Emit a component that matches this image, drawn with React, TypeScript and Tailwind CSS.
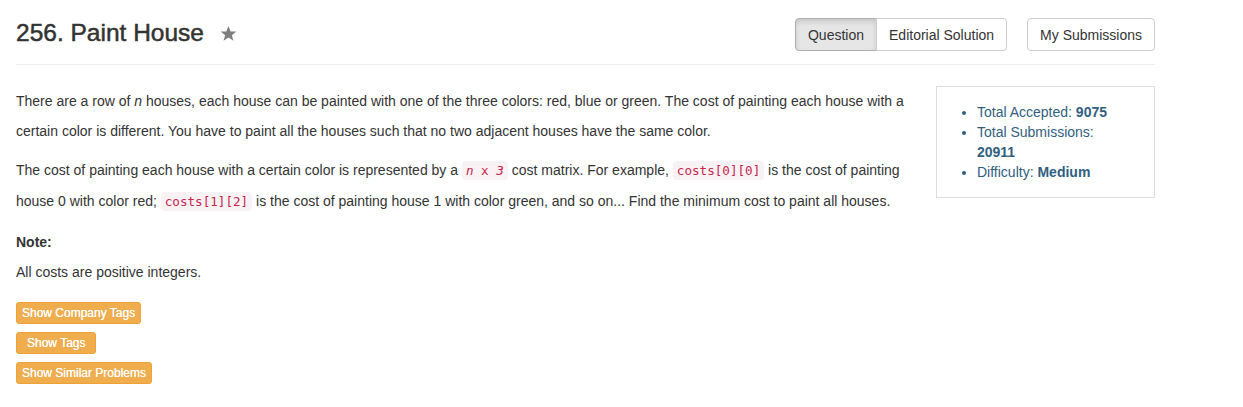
import React from "react";

function Star() {
  return (
    <svg viewBox="0 0 24 24" className="h-[17px] w-[17px]" fill="#7f7f7f">
      <polygon points="12,1.5 15,9 23,9.3 16.8,14.3 19,22.3 12,17.8 5,22.3 7.2,14.3 1,9.3 9,9" />
    </svg>
  );
}

function Code({ children }: { children: React.ReactNode }) {
  return (
    <code
      className="rounded px-1 py-0.5 text-[12.6px] bg-[#f9f2f4] text-[#c7254e]"
      style={{ fontFamily: '"DejaVu Sans Mono", "Liberation Mono", monospace' }}
    >
      {children}
    </code>
  );
}

function TagButton({ label, wide }: { label: string; wide?: boolean }) {
  return (
    <button
      className={
        "h-[22px] rounded-[3px] border border-[#eea236] bg-[#f0ad4e] text-[12px] leading-[18px] text-white [text-shadow:0_0_0.4px_#fff] " +
        (wide ? "px-[10px]" : "px-[5px]")
      }
    >
      {label}
    </button>
  );
}

export default function App() {
  return (
    <div
      className="min-h-[407px] bg-white text-[14px] text-[#333]"
      style={{ fontFamily: '"Liberation Sans", Helvetica, Arial, sans-serif' }}
    >
      <div className="w-[1155px] pl-[16px] pt-[18px]">
        {/* header */}
        <div className="flex items-start justify-between">
          <div className="flex items-center">
            <h3 className="text-[24.5px] font-normal leading-[29px] text-[#333] [-webkit-text-stroke:0.5px_#333]">
              256. Paint House
            </h3>
            <span className="ml-[16px] mt-[1px]">
              <Star />
            </span>
          </div>
          <div className="flex items-center">
            <div className="flex">
              <button className="h-[33px] rounded-l border border-[#adadad] bg-[#e6e6e6] px-3 leading-[20px] text-[#333] shadow-[inset_0_3px_5px_rgba(0,0,0,0.125)]">
                Question
              </button>
              <button className="-ml-px h-[33px] rounded-r border border-[#ccc] bg-white px-3 leading-[20px] text-[#333]">
                Editorial Solution
              </button>
            </div>
            <button className="ml-[20px] h-[33px] rounded border border-[#ccc] bg-white px-3 leading-[20px] text-[#333]">
              My Submissions
            </button>
          </div>
        </div>
        <hr className="mt-[13px] border-t border-[#eee]" />

        {/* content */}
        <div className="mt-[21px] flex">
          <div className="w-[906px]">
            <p className="mb-[9px] leading-[30px]">
              There are a row of <i>n</i> houses, each house can be painted with one of the three
              colors: red, blue or green. The cost of painting each house with a certain color is
              different. You have to paint all the houses such that no two adjacent houses have the
              same color.
            </p>
            <p className="mb-[10px] leading-[30px]">
              The cost of painting each house with a certain color is represented by a{" "}
              <Code>
                <i>n</i> x <i>3</i>
              </Code>{" "}
              cost matrix. For example, <Code>costs[0][0]</Code> is the cost of painting house 0
              with color red; <Code>costs[1][2]</Code> is the cost of painting house 1 with color
              green, and so on... Find the minimum cost to paint all houses.
            </p>
            <p className="leading-[30px]">
              <b>Note:</b>
              <br />
              All costs are positive integers.
            </p>
            <div className="mt-[15px] flex flex-col items-start gap-2">
              <TagButton label="Show Company Tags" />
              <TagButton label="Show Tags" wide />
              <TagButton label="Show Similar Problems" />
            </div>
          </div>
          <div className="ml-[14px] w-[219px]">
            <div className="border border-[#ddd] py-[15px] pl-[15px] pr-[30px] text-[#31607f]">
              <ul className="list-disc pl-[25px] leading-[20px]">
                <li>
                  Total Accepted: <b>9075</b>
                </li>
                <li>
                  Total Submissions: <b>20911</b>
                </li>
                <li>
                  Difficulty: <b>Medium</b>
                </li>
              </ul>
            </div>
          </div>
        </div>
      </div>
    </div>
  );
}
